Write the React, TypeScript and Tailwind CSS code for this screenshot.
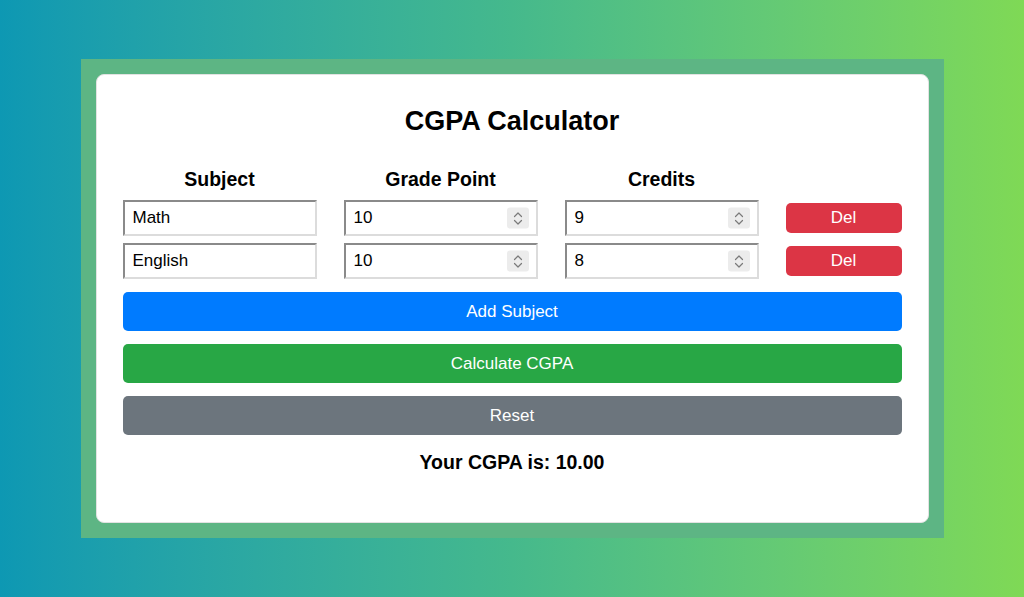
function Spinner() {
  return (
    <div className="absolute right-[7px] top-1/2 flex h-[21px] w-[22px] -translate-y-1/2 items-center justify-center rounded-[3px] bg-[#ececec]">
      <svg width="10" height="16" viewBox="0 0 10 16" fill="none" stroke="#7a7a7a" strokeWidth="1.2" strokeLinecap="round" strokeLinejoin="round">
        <path d="M1.5 6 L5 2.5 L8.5 6" />
        <path d="M1.5 10 L5 13.5 L8.5 10" />
      </svg>
    </div>
  );
}

function Field({ value, number }: { value: string; number?: boolean }) {
  return (
    <div className="relative flex h-[36px] items-center border-2 border-t-[#8a8a8a] border-l-[#8a8a8a] border-r-[#dcdcdc] border-b-[#dcdcdc] bg-white pl-[8px] text-[17px] text-black">
      {value}
      {number && <Spinner />}
    </div>
  );
}

const rows = [
  { subject: "Math", grade: "10", credits: "9" },
  { subject: "English", grade: "10", credits: "8" },
];

export default function App() {
  return (
    <div className="flex h-screen w-full items-center justify-center bg-linear-to-r from-[#0d98b3] via-[#45b98c] to-[#7fd955] font-['Liberation_Sans',Arial,sans-serif]">
      <div className="bg-[#5db584] p-[15px]">
        <div className="flex h-[449px] w-[833px] flex-col rounded-lg border border-[#e2e2e2] bg-white px-[26px] pt-[31px]">
          <h1 className="text-center text-[27px] leading-[30px] font-bold text-black">CGPA Calculator</h1>

          <div className="mt-[32px] grid grid-cols-[194px_194px_194px_116px] gap-x-[27px] gap-y-[7px]">
            <div className="mb-[3px] text-center text-[19.5px] leading-[22px] font-bold">Subject</div>
            <div className="mb-[3px] text-center text-[19.5px] leading-[22px] font-bold">Grade Point</div>
            <div className="mb-[3px] text-center text-[19.5px] leading-[22px] font-bold">Credits</div>
            <div />
            {rows.map((r, i) => (
              <div key={i} className="contents">
                <Field value={r.subject} />
                <Field value={r.grade} number />
                <Field value={r.credits} number />
                <div className="flex items-center">
                  <button className="h-[30px] w-full rounded-[5px] bg-[#dc3545] text-[17px] text-white">Del</button>
                </div>
              </div>
            ))}
          </div>

          <div className="mt-[13px] flex flex-col gap-[13px]">
            <button className="h-[39px] w-full rounded-[5px] bg-[#007bff] text-[17px] text-white">Add Subject</button>
            <button className="h-[39px] w-full rounded-[5px] bg-[#28a745] text-[17px] text-white">Calculate CGPA</button>
            <button className="h-[39px] w-full rounded-[5px] bg-[#6c757d] text-[17px] text-white">Reset</button>
          </div>

          <p className="mt-[16px] text-center text-[19.5px] leading-[22px] font-bold text-black">Your CGPA is: 10.00</p>
        </div>
      </div>
    </div>
  );
}
